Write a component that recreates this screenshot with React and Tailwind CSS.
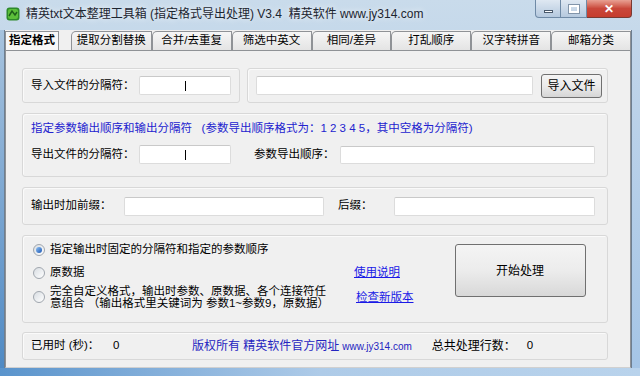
import React from "react";

const F = "font-['Liberation_Sans','Noto_Sans_CJK_SC',sans-serif]";

function Input({ w, h = 19, children }) {
  return (
    <div
      className={`bg-white border border-[#dcdcdc] border-t-[#c9c9c9] rounded-[2px] flex items-center justify-center text-[11px] text-black`}
      style={{ width: w, height: h }}
    >
      {children}
    </div>
  );
}

function Group({ className = "", children }) {
  return (
    <div className={`border border-[#d8d8d8] rounded-[3px] shadow-[inset_1px_1px_0_#fafafa] bg-[#f0f0f0] ${className}`}>
      {children}
    </div>
  );
}

function Radio({ checked }) {
  return (
    <div className="w-[12px] h-[12px] rounded-full border border-[#a0a6ae] bg-gradient-to-br from-[#d8dde2] to-[#ffffff] flex items-center justify-center shrink-0">
      {checked && (
        <div className="w-[6px] h-[6px] rounded-full bg-gradient-to-br from-[#8fc1f3] to-[#1b56b2]" />
      )}
    </div>
  );
}

function Tab({ label, w = 80 }) {
  return (
    <div
      className="h-[19px] border border-b-0 border-[#8f9296] rounded-tl-[5px] bg-gradient-to-b from-[#f6f6f6] to-[#e4e4e4] flex items-center justify-center text-[11.5px] text-black"
      style={{ width: w }}
    >
      {label}
    </div>
  );
}

function Caret() {
  return <div className="w-[1px] h-[10px] bg-black" />;
}

export default function App() {
  return (
    <div className={`w-[640px] h-[376px] overflow-hidden flex flex-col bg-gradient-to-b from-[#c9dbeb] to-[#9fc1e3] ${F}`}>
      {/* Title bar */}
      <div className="h-[30px] flex items-start relative">
        <svg className="mt-[7px] ml-[6px]" width="14" height="14" viewBox="0 0 14 14">
          <rect x="0.5" y="0.5" width="13" height="13" rx="3" fill="#2e8a2a" />
          <rect x="2" y="2" width="10" height="10" rx="2" fill="#5cbf3a" />
          <path d="M3 9 L6 4 L9 8 L11 5" stroke="#1e5e1a" strokeWidth="1.5" fill="none" />
        </svg>
        <div className="ml-[6px] mt-[6px] text-[12px] text-[#1c2530] whitespace-pre leading-[16px] [text-shadow:0_0_6px_#ffffff]">
          精英txt文本整理工具箱 (指定格式导出处理) V3.4  精英软件 www.jy314.com
        </div>
        <div className="absolute right-[8px] top-0 flex">
          <div className="w-[26px] h-[18px] rounded-bl-[4px] border border-[#6f8aa6] border-t-0 bg-gradient-to-b from-[#dfe8f2] to-[#b5c9de] flex items-center justify-center">
            <div className="w-[9px] h-[3px] bg-white border border-[#4a5a6c] mt-[5px]" />
          </div>
          <div className="w-[26px] h-[18px] border border-l-0 border-[#6f8aa6] border-t-0 bg-gradient-to-b from-[#dfe8f2] to-[#b5c9de] flex items-center justify-center">
            <div className="w-[10px] h-[8px] border-[2px] border-white outline outline-1 outline-[#8295aa]" />
          </div>
          <div className="w-[45px] h-[18px] rounded-br-[4px] border border-l-0 border-[#7a3a32] border-t-0 bg-gradient-to-b from-[#e8a093] via-[#c9473a] to-[#c63d2e] flex items-center justify-center text-white text-[12px] font-bold leading-none">
            ✕
          </div>
        </div>
      </div>

      {/* Body */}
      <div className="flex h-[338px]">
        <div className="w-[4px] bg-gradient-to-b from-[#a7c3de] to-[#4f8ac4]" />
        <div className="w-[628px] bg-[#f0f0f0] border-l border-r border-[#6d7e90] flex flex-col">
          {/* Tabs */}
          <div className="flex items-end h-[20px] pt-[1px]">
            <div className="w-[54px] h-[19px] border border-b-0 border-[#8f9296] bg-[#f8f8f8] flex items-center justify-center text-[11.5px] font-bold text-black">
              指定格式
            </div>
            <div className="w-[12px]" />
            <Tab label="提取分割替换" w={81} />
            <Tab label="合并/去重复" />
            <Tab label="筛选中英文" />
            <Tab label="相同/差异" />
            <Tab label="打乱顺序" />
            <Tab label="汉字转拼音" />
            <Tab label="邮箱分类" />
          </div>
          {/* Panel */}
          <div className="flex-1 border border-[#8f9296] border-b-[#d0d0d0] bg-[#f0f0f0] pl-[16px] pr-[22px] pt-[17px] flex flex-col text-[11.5px] text-black">
            {/* G1 */}
            <div className="flex h-[35px] gap-[7px]">
              <Group className="w-[218px] flex items-center pl-[8px]">
                <div className="w-[108px]">导入文件的分隔符：</div>
                <Input w={92}><Caret /></Input>
              </Group>
              <Group className="flex-1 flex items-center pl-[8px]">
                <Input w={277} />
                <div className="ml-[8px] w-[61px] h-[24px] rounded-[3px] border border-[#707070] bg-gradient-to-b from-[#f4f4f4] via-[#ebebeb] to-[#d6d6d6] flex items-center justify-center text-[12px]">
                  导入文件
                </div>
              </Group>
            </div>
            {/* G2 */}
            <Group className="mt-[10px] h-[64px] flex flex-col pl-[8px]">
              <div className="mt-[6px] text-[#2323cf] whitespace-pre leading-[16px]">
                指定参数输出顺序和输出分隔符   (参数导出顺序格式为：1 2 3 4 5，其中空格为分隔符)
              </div>
              <div className="mt-[9px] flex items-center">
                <div className="w-[108px]">导出文件的分隔符：</div>
                <Input w={92} h={19}><Caret /></Input>
                <div className="ml-[23px] w-[86px]">参数导出顺序：</div>
                <Input w={255} h={18} />
              </div>
            </Group>
            {/* G3 */}
            <Group className="mt-[10px] h-[38px] flex items-center pl-[8px]">
              <div className="w-[93px]">输出时加前缀：</div>
              <Input w={200} h={19} />
              <div className="ml-[14px] w-[56px]">后缀：</div>
              <Input w={201} h={19} />
            </Group>
            {/* G4 */}
            <Group className="mt-[10px] h-[88px] flex pl-[10px]">
              <div className="w-[321px] flex flex-col">
                <div className="mt-[7px] flex items-center gap-[5px] h-[14px]">
                  <Radio checked />
                  <span>指定输出时固定的分隔符和指定的参数顺序</span>
                </div>
                <div className="mt-[9px] flex items-center gap-[5px] h-[14px]">
                  <Radio />
                  <span>原数据</span>
                </div>
                <div className="mt-[5px] flex items-center gap-[5px]">
                  <Radio />
                  <div className="text-[11.5px] leading-[12px] whitespace-pre">
                    <div>完全自定义格式，输出时参数、原数据、各个连接符任</div>
                    <div>意组合 （输出格式里关键词为 参数1~参数9，原数据）</div>
                  </div>
                </div>
              </div>
              <div className="flex flex-col ml-[0px]">
                <div className="mt-[29px] text-[#1a1ae6] underline leading-[14px]">使用说明</div>
                <div className="mt-[11px] ml-[2px] text-[#1a1ae6] underline leading-[14px]">检查新版本</div>
              </div>
              <div className="ml-[41px] mt-[8px] w-[131px] h-[53px] rounded-[3px] border border-[#707070] bg-gradient-to-b from-[#f4f4f4] via-[#ececec] to-[#d8d8d8] flex items-center justify-center text-[12px]">
                开始处理
              </div>
            </Group>
            {/* G5 */}
            <Group className="mt-[9px] h-[28px] flex items-center pl-[8px]">
              <div className="w-[82px]">已用时 (秒)：</div>
              <div className="w-[79px]">0</div>
              <div className="text-[#2525c0] text-[12px] whitespace-pre">版权所有 精英软件官方网址</div>
              <div className="ml-[3px] text-[#2525c0] text-[10px]">www.jy314.com</div>
              <div className="ml-[20px] w-[95px] text-[12px]">总共处理行数：</div>
              <div>0</div>
            </Group>
          </div>
        </div>
        <div className="flex-1 bg-gradient-to-b from-[#c2d6ea] to-[#a5c5e6]" />
      </div>
      <div className="flex-1 bg-gradient-to-r from-[#5a94cc] via-[#aecbe8] to-[#b9d3ec]" />
    </div>
  );
}
